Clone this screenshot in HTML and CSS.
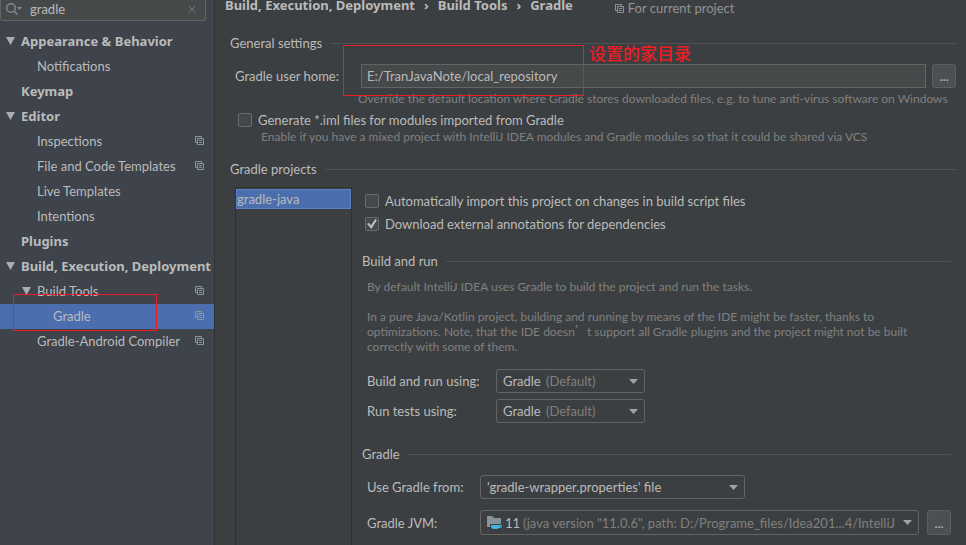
FILE: index.html
```html
<!DOCTYPE html>
<html lang="en">
<head>
<meta charset="utf-8">
<title>Settings</title>
<link rel="stylesheet" href="styles.css">
</head>
<body>
<svg class="defs" aria-hidden="true">
  <symbol id="copy" viewBox="0 0 9 9"><path d="M2 6.500H.5v-6h6V2M2.500 2.500h6v6h-6zM4 4.500h3M4 6.500h3" fill="none" stroke="currentColor"/></symbol>
  <symbol id="down" viewBox="0 0 9 8"><path d="M0 0h9L4.500 8z" fill="currentColor"/></symbol>
  <symbol id="caret" viewBox="0 0 9 5"><path d="M0 0h9L4.500 5z" fill="currentColor"/></symbol>
</svg>
<div class="window">
  <aside class="sidebar">
    <div class="search">
      <svg class="search-icon" viewBox="0 0 16 12" aria-hidden="true"><circle cx="5" cy="5" r="4.300" fill="none" stroke="currentColor" stroke-width="1.400"/><path d="M8 8l3.500 3.500" stroke="currentColor" stroke-width="1.600"/><path d="M11 4h5l-2.500 3z" fill="currentColor"/></svg>
      <input class="search-input" type="text" value="gradle" aria-label="Search settings">
      <button class="clear" aria-label="Clear search"><svg viewBox="0 0 8 8"><path d="M.5.5l7 7M7.500.5l-7 7" stroke="currentColor"/></svg></button>
    </div>
    <nav class="tree" aria-label="Settings">
      <a href="#" class="node group"><svg class="arrow"><use href="#down"/></svg><span>Appearance &amp; Behavior</span></a>
      <a href="#" class="node leaf"><span>Notifications</span></a>
      <a href="#" class="node group plain"><span>Keymap</span></a>
      <a href="#" class="node group"><svg class="arrow"><use href="#down"/></svg><span>Editor</span></a>
      <a href="#" class="node leaf"><span>Inspections</span><svg class="copy"><use href="#copy"/></svg></a>
      <a href="#" class="node leaf"><span>File and Code Templates</span><svg class="copy"><use href="#copy"/></svg></a>
      <a href="#" class="node leaf"><span>Live Templates</span></a>
      <a href="#" class="node leaf"><span>Intentions</span></a>
      <a href="#" class="node group plain"><span>Plugins</span></a>
      <a href="#" class="node group"><svg class="arrow"><use href="#down"/></svg><span>Build, Execution, Deployment</span></a>
      <a href="#" class="node sub"><svg class="arrow"><use href="#down"/></svg><span>Build Tools</span><svg class="copy"><use href="#copy"/></svg></a>
      <a href="#" class="node deep selected" aria-current="page"><span>Gradle</span><svg class="copy"><use href="#copy"/></svg><i class="mark mark-node"></i></a>
      <a href="#" class="node leaf"><span>Gradle-Android Compiler</span><svg class="copy"><use href="#copy"/></svg></a>
    </nav>
  </aside>
  <main class="panel">
    <header class="header">
      <nav class="crumbs" aria-label="Breadcrumb"><span>Build, Execution, Deployment</span><span class="sep">›</span><span>Build Tools</span><span class="sep">›</span><span>Gradle</span></nav>
      <span class="scope"><svg class="copy"><use href="#copy"/></svg>For current project</span>
    </header>

    <h2 class="title outer">General settings</h2>
    <div class="home">
      <label class="home-label" for="home">Gradle user home:</label>
      <input class="field" id="home" type="text" value="E:/TranJavaNote/local_repository">
      <button class="more" aria-label="Browse">...</button>
      <i class="mark mark-home"></i>
      <span class="note" lang="zh">设置的家目录</span>
    </div>
    <p class="hint home-hint">Override the default location where Gradle stores downloaded files, e.g. to tune anti-virus software on Windows</p>
    <label class="check iml"><input type="checkbox">Generate *.iml files for modules imported from Gradle</label>
    <p class="hint iml-hint">Enable if you have a mixed project with IntelliJ IDEA modules and Gradle modules so that it could be shared via VCS</p>

    <h2 class="title outer projects-title">Gradle projects</h2>
    <div class="projects">
      <ul class="list"><li class="item">gradle-java</li></ul>
      <div class="details">
        <div class="checks">
          <label class="check"><input type="checkbox">Automatically import this project on changes in build script files</label>
          <label class="check"><input type="checkbox" checked>Download external annotations for dependencies</label>
        </div>
        <h3 class="title">Build and run</h3>
        <div class="hint about">
          <p>By default IntelliJ IDEA uses Gradle to build the project and run the tasks.</p>
          <p>In a pure Java/Kotlin project, building and running by means of the IDE might be faster, thanks to<br>optimizations. Note, that the IDE doesn<span class="wide">’</span>t support all Gradle plugins and the project might not be built<br>correctly with some of them.</p>
        </div>
        <div class="form run">
          <label for="build">Build and run using:</label>
          <div class="combo"><select id="build"><option>Gradle</option></select><span class="after">(Default)</span><svg class="caret"><use href="#caret"/></svg></div>
          <label for="tests">Run tests using:</label>
          <div class="combo"><select id="tests"><option>Gradle</option></select><span class="after">(Default)</span><svg class="caret"><use href="#caret"/></svg></div>
        </div>
        <h3 class="title">Gradle</h3>
        <div class="form dist">
          <label for="from">Use Gradle from:</label>
          <div class="combo from"><select id="from"><option>'gradle-wrapper.properties' file</option></select><svg class="caret"><use href="#caret"/></svg></div>
          <label for="jvm">Gradle JVM:</label>
          <div class="jvm-row">
            <div class="combo jvm"><select id="jvm"><option>11</option></select><svg class="jdk" viewBox="0 0 16 14" aria-hidden="true"><path d="M0 0h5l2 2h7v6H3v3H0z" fill="#87939a"/><path d="M4 9h9v1q-1 3-3 3H7q-3 0-3-3z" fill="#40b6e0"/><path d="M12 9.500h2.500l-.5 2h-2" fill="none" stroke="#40b6e0"/></svg><span class="after">(java version "11.0.6", path: D:/Programe_files/Idea201...4/IntelliJ</span><svg class="caret"><use href="#caret"/></svg></div>
            <button class="more" aria-label="Browse JVM">...</button>
          </div>
        </div>
      </div>
    </div>
  </main>
</div>
</body>
</html>
```
FILE: styles.css
```css
* { box-sizing: border-box; margin: 0; padding: 0; }
body {
  background: #3c3f41;
  color: #bbbbbb;
  font: 13px/20px Lato, "Noto Sans CJK SC", sans-serif;
}
input, button, select { font: inherit; color: inherit; }
.defs { position: absolute; width: 0; height: 0; }
.window { display: grid; grid-template-columns: 215px 1fr; height: 100vh; overflow: hidden; }

.sidebar { background: #3e434c; border-right: 1px solid #323232; }
.search {
  display: flex; align-items: center; height: 21px; margin: 0 8px 8px 0; padding: 0 9px 3px 5px;
  background: #45494a; border: 1px solid #646464; border-top: 0; border-radius: 0 0 3px 3px;
}
.search-icon { width: 16px; height: 12px; color: #7f8b91; }
.search-input { flex: 1; min-width: 0; margin-left: 8px; height: 18px; background: none; border: 0; outline: 0; }
.clear { display: flex; background: none; border: 0; color: #75797b; }
.clear svg { width: 8px; height: 8px; }

.node {
  position: relative; display: flex; align-items: center; height: 25px;
  padding: 0 10px 2px 0; color: inherit; text-decoration: none; white-space: nowrap;
}
.node .copy { margin-left: auto; }
.group, .crumbs { font-family: "Noto Sans", sans-serif; font-weight: 700; }
.group { padding-left: 6px; }
.plain { padding-left: 21px; }
.leaf { padding-left: 37px; }
.sub { padding-left: 22px; }
.deep { padding-left: 53px; }
.arrow { flex: none; width: 9px; height: 8px; margin-right: 6px; color: #adadad; }
.copy { flex: none; width: 9px; height: 9px; color: #8b979e; }
.selected { background: #4b6eaf; }
.mark { position: absolute; border: 1px solid #ed1c24; pointer-events: none; }
.mark-node { left: 13px; top: -10px; width: 144px; height: 37px; }

.panel { min-width: 0; padding: 0 10px; }
.header { display: flex; height: 33px; white-space: nowrap; }
.crumbs { line-height: 10px; }
.sep { margin: 0 9px; }
.scope { display: flex; align-items: center; gap: 4px; height: 16px; margin-left: 42px; color: #919394; }

.title { display: flex; align-items: center; gap: 8px; font-size: 13px; font-weight: 400; }
.title::after { content: ""; flex: 1; height: 1px; background: #515151; }
.outer { margin-left: 5px; }
.projects-title { margin-top: 14px; }

.home { position: relative; display: flex; align-items: center; margin: 11px 0 3px 10px; }
.home-label { width: 126px; white-space: nowrap; }
.field { flex: 1; min-width: 0; height: 24px; padding: 0 5px; background: #45494a; border: 1px solid #646464; outline: 0; }
.more {
  width: 24px; height: 24px; margin-left: 6px; line-height: 20px;
  background: #4c5052; border: 1px solid #5e6060; border-radius: 3px;
}
.mark-home { left: 108px; top: -19px; width: 241px; height: 51px; }
.note { position: absolute; left: 354px; top: -22px; color: #ed1c24; font: 500 17px/22px "Noto Sans CJK SC", sans-serif; }

.hint { color: #808080; font-size: 12px; line-height: 16px; }
.home-hint { margin-left: 133px; white-space: nowrap; }
.iml { margin: 5px 0 1px 13px; }
.iml-hint { margin-left: 36px; }
.check { display: flex; align-items: center; gap: 6px; height: 16px; }
.check input {
  appearance: none; width: 14px; height: 14px;
  background: #43494a; border: 1px solid #6b6b6b; border-radius: 2px;
}
.check input:checked::before {
  content: ""; display: block; width: 10px; height: 10px; margin: 1px;
  background: #bbbbbb; clip-path: polygon(0 50%, 18% 38%, 40% 62%, 82% 0, 100% 10%, 44% 100%);
}

.projects { display: grid; grid-template-columns: 117px 1fr; margin: 8px 5px 0 10px; height: 400px; }
.list { padding-top: 1px; list-style: none; border: 1px solid #323232; }
.item { height: 20px; padding-left: 1px; background: #4b6eaf; outline: 1px solid #5a81c8; outline-offset: -1px; }
.details { min-width: 0; padding-left: 10px; }
.checks { display: grid; gap: 7px; margin: 6px 0 19px 3px; }
.about { margin: 8px 0 15px 5px; line-height: 15px; }
.about p + p { margin-top: 15px; }
.wide { font-family: "Noto Sans CJK SC", sans-serif; line-height: 1; }
.form { display: grid; align-items: center; margin-left: 5px; white-space: nowrap; }
.run { grid-template-columns: 129px 149px; row-gap: 6px; margin-bottom: 21px; }
.dist { grid-template-columns: 113px 1fr; row-gap: 11px; margin-top: 11px; }
.combo { display: grid; grid-template-columns: minmax(0, 1fr); align-items: center; min-width: 0; border: 1px solid #646464; border-radius: 3px; }
.combo > * { grid-area: 1 / 1; }
.combo select { appearance: none; width: 100%; height: 22px; padding-left: 6px; background: transparent; border: 0; outline: 0; }
.after { padding-left: 49px; color: #808080; pointer-events: none; }
.caret { justify-self: end; width: 9px; height: 5px; margin-right: 6px; color: #a0a3a5; pointer-events: none; }
.from { width: 265px; }
.jvm-row { display: flex; align-items: center; }
.jvm { flex: 1; }
.jvm select { height: 23px; padding-left: 24px; }
.jvm .after { padding-left: 42px; }
.jdk { width: 16px; height: 14px; margin-left: 6px; pointer-events: none; }
.jvm-row .more { margin-left: 8px; height: 25px; }
```
